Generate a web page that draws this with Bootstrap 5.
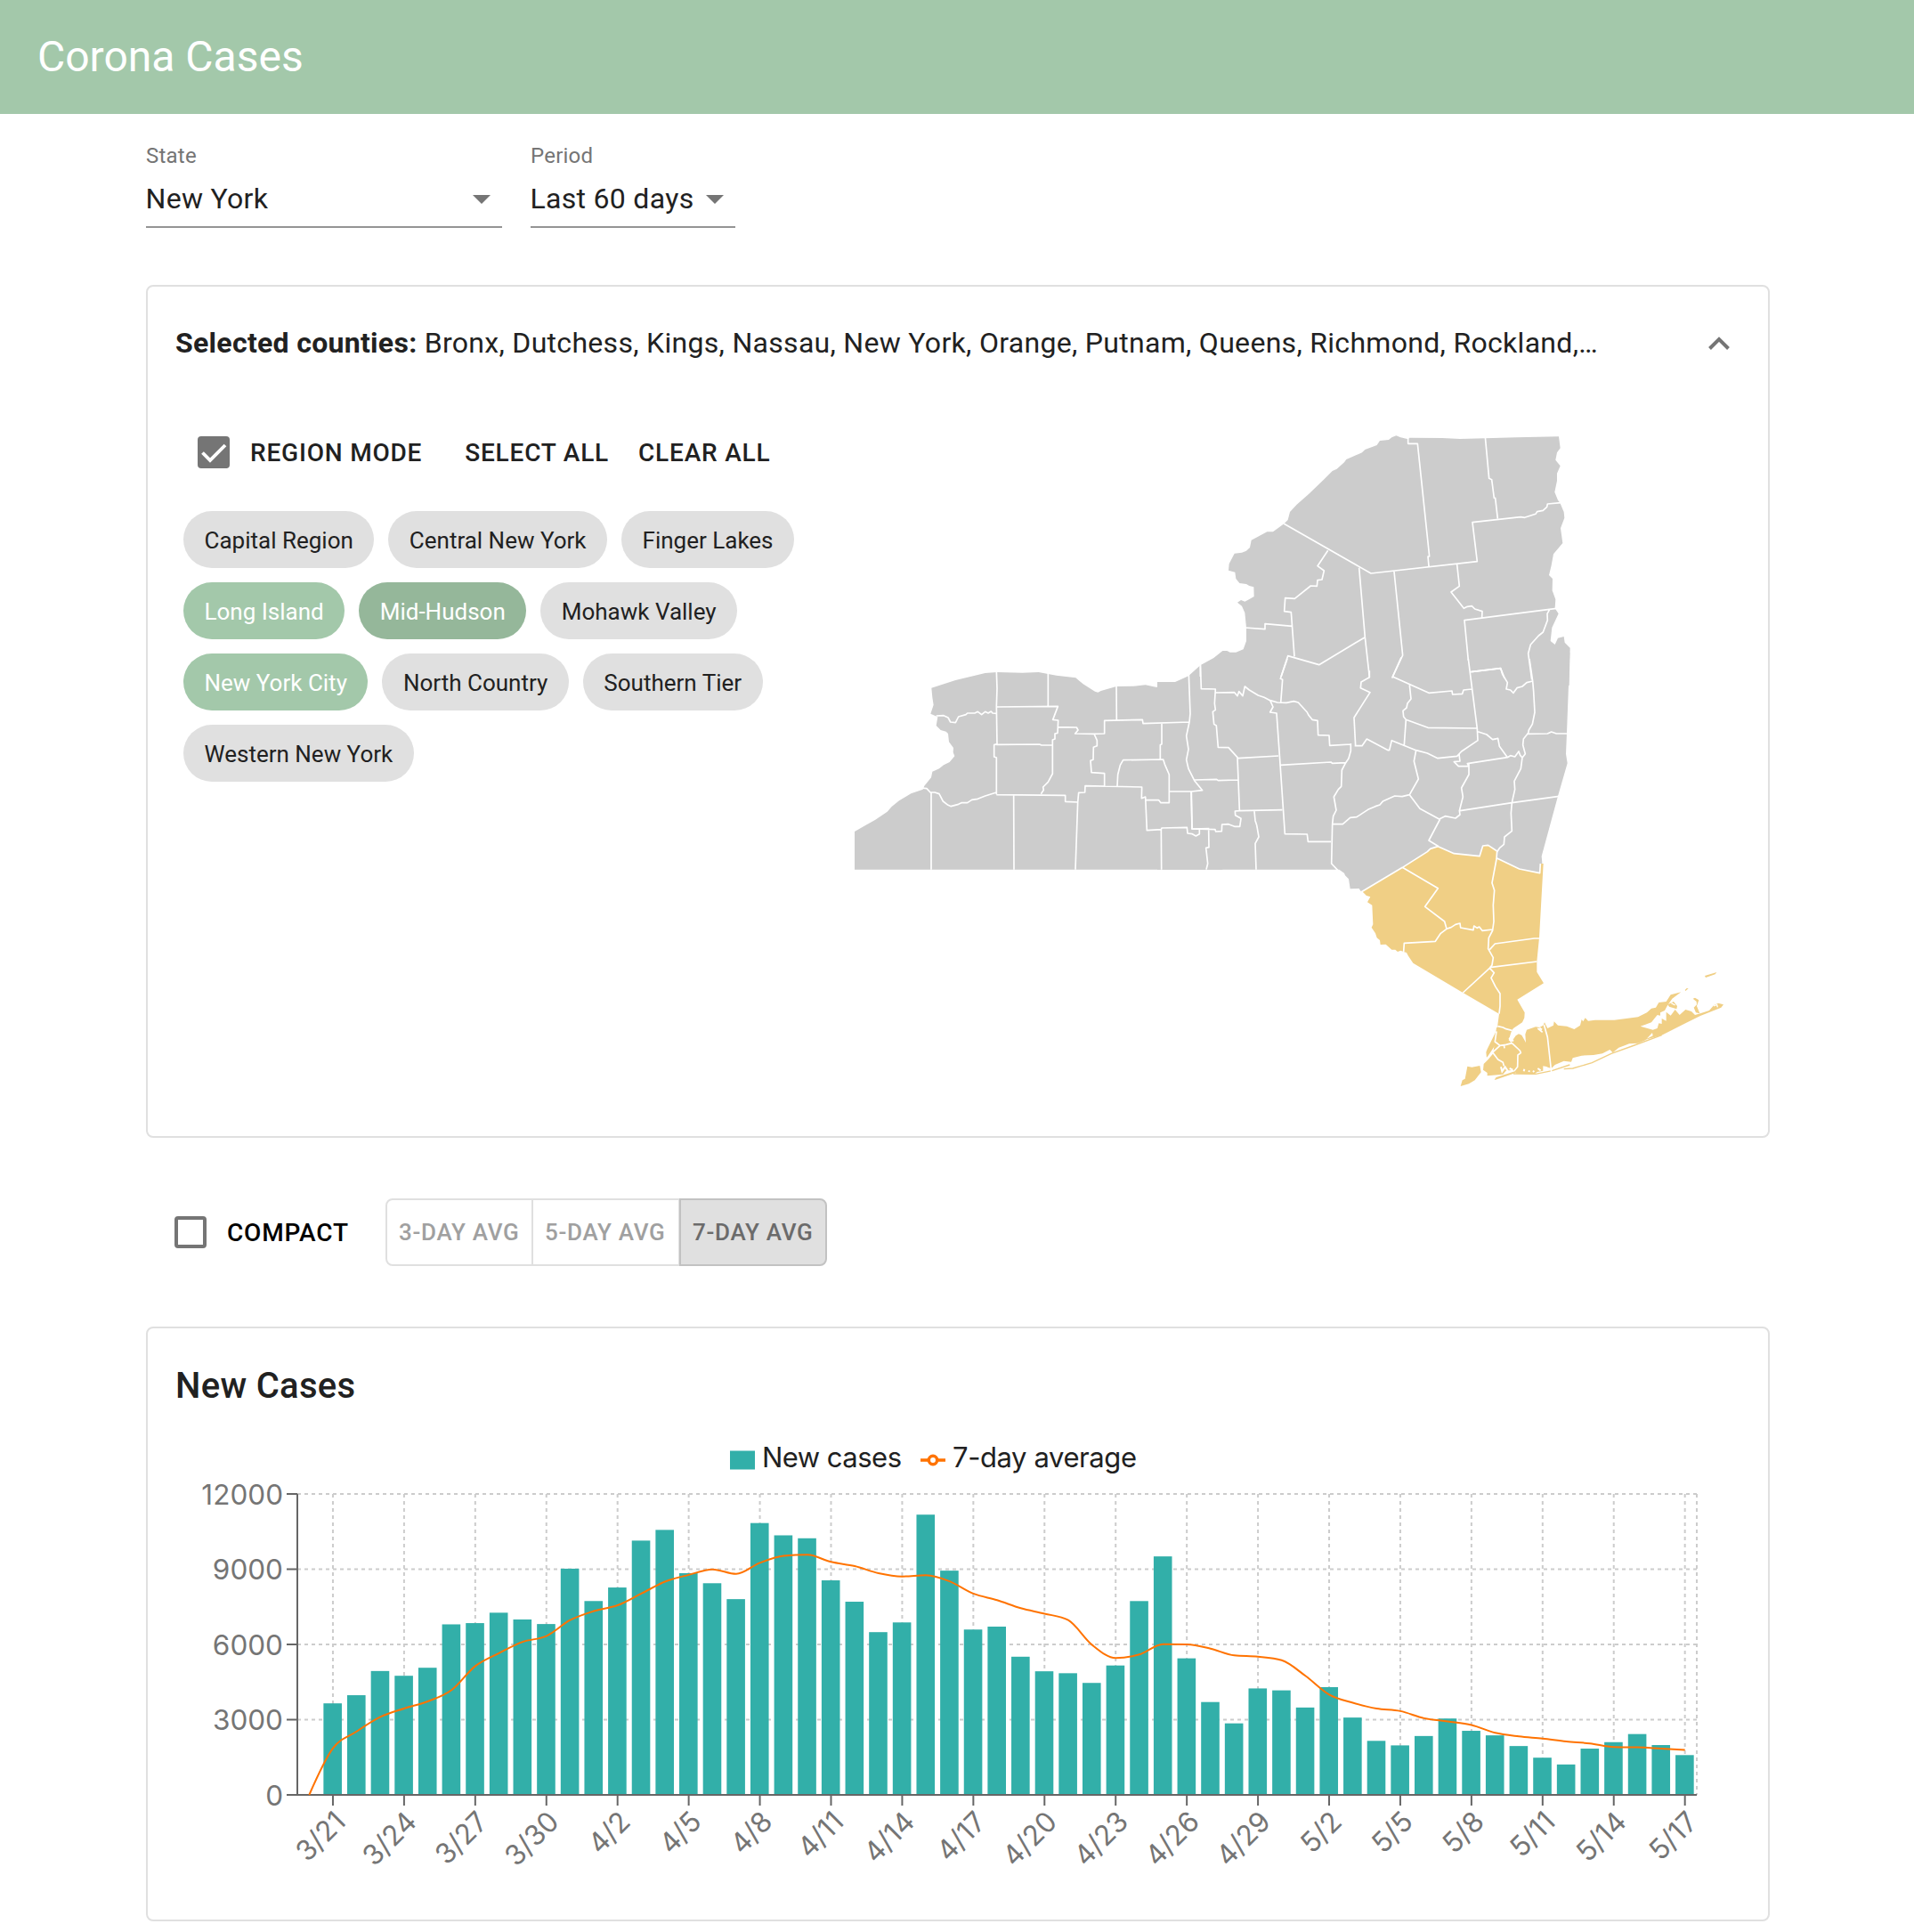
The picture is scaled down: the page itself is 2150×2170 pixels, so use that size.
<!DOCTYPE html>
<html lang="en">
<head>
<meta charset="utf-8">
<title>Corona Cases</title>
<link href="https://cdn.jsdelivr.net/npm/bootstrap@5.3.0/dist/css/bootstrap.min.css" rel="stylesheet">
<style>
body{font-family:Roboto,"Liberation Sans",sans-serif;color:#212121;background:#fff;letter-spacing:.3px;font-size:32px;line-height:1.2;overflow:hidden}
.topbar{height:128px;background:#a3c8aa;padding:0 42px;font-size:48px;letter-spacing:0}
.page{width:1824px;margin-left:164px}
.filters{gap:32px;height:192px;padding-top:32px}
.field{height:96px;border-bottom:2px solid #949494;padding-top:1px}
.field.state{width:400px}.field.period{width:230px}
.field label{display:block;font-size:24px;line-height:28px;color:#757575;letter-spacing:.22px}
.field .value{margin-top:15px;line-height:38px;padding-right:13px}
.field .value span{margin-left:-.5px}
.field .value svg{margin-top:2px}
.panel{border:2px solid #e0e0e0;border-radius:8px}
.panel-map{height:958px}
.summary{height:128px;padding:0 38px 2px 31px}
.summary .names{width:1600px}
.side{width:792px;padding-left:40px}
.tools{height:116px;font-size:28px;font-weight:500;letter-spacing:.8px;padding-left:10px}
.tools span{padding-top:2px}
.chips{gap:16px;width:720px;margin-top:8px}
.chip{height:64px;line-height:66px;padding:0 23.500px;border-radius:32px;background:#e0e0e0;font-size:26px;letter-spacing:0}
.chip.on{background:#a3c8aa;color:#fff}.chip.focus{background:#95b79a;color:#fff}
.map{width:984px;height:760px;margin-top:24px}
.map .land{fill:#ccc}.map .sel{fill:#f0cf85}
.map .bd{fill:none;stroke:#fff;stroke-width:5;stroke-linejoin:round}
.options{height:212px;padding-left:27px;font-size:28px;font-weight:500;letter-spacing:.8px;color:#000}
.avg{height:76px;margin-left:41px}
.avg .btn{width:166px;padding:0;border:2px solid #e0e0e0;border-radius:8px;color:#a0a0a0;font-size:26px;font-weight:500;letter-spacing:.74px}
.avg .btn+.btn{margin-left:0;border-left-width:0}
.avg .btn.active{background:#e0e0e0;border-color:#c2c2c2;color:#6b6b6b;border-left:2px solid #c2c2c2;margin-left:-2px}
.panel-chart{height:668px;padding:42px 0 0 31px}
.panel-chart h2{font-size:40px;font-weight:500;line-height:46px;margin:0;letter-spacing:.3px}
.chart{display:block;width:1780px;height:560px;margin-top:8px;font-family:Inter,"Liberation Sans",sans-serif;letter-spacing:0}
</style>
</head>
<body>
<header class="topbar d-flex align-items-center text-white">Corona Cases</header>
<main class="page">
  <div class="filters d-flex align-items-start">
    <div class="field state"><label>State</label>
      <div class="value d-flex justify-content-between align-items-center"><span>New York</span><svg width="20" height="10"><path d="M0 0h20L10 10z" fill="#757575"/></svg></div></div>
    <div class="field period"><label>Period</label>
      <div class="value d-flex justify-content-between align-items-center"><span>Last 60 days</span><svg width="20" height="10"><path d="M0 0h20L10 10z" fill="#757575"/></svg></div></div>
  </div>

  <section class="panel panel-map">
    <div class="summary d-flex align-items-center justify-content-between">
      <div class="names text-nowrap"><b>Selected counties:</b> Bronx, Dutchess, Kings, Nassau, New York, Orange, Putnam, Queens, Richmond, Rockland,…</div>
      <svg width="36" height="24" viewBox="0 0 36 24"><path d="M8.500 18.500 19 8 29.500 18.500" fill="none" stroke="#757575" stroke-width="4"/></svg>
    </div>
    <div class="d-flex">
      <div class="side">
        <div class="tools d-flex align-items-center">
          <svg class="ms-1" width="40" height="36"><rect x="2" width="36" height="36" rx="4" fill="#757575"/><path d="M7.500 18.500 16 27 33 10" fill="none" stroke="#fff" stroke-width="3.800"/></svg>
          <span style="margin-left:21px">REGION MODE</span><span style="margin-left:48px">SELECT ALL</span><span style="margin-left:33px">CLEAR ALL</span>
        </div>
        <div class="chips d-flex flex-wrap">
          <span class="chip">Capital Region</span><span class="chip">Central New York</span><span class="chip">Finger Lakes</span>
          <span class="chip on">Long Island</span><span class="chip focus">Mid-Hudson</span><span class="chip">Mohawk Valley</span>
          <span class="chip on">New York City</span><span class="chip">North Country</span><span class="chip">Southern Tier</span>
          <span class="chip">Western New York</span>
        </div>
      </div>
      <svg class="map" viewBox="958 474 984 760">
        <!-- western New York -->
        <g transform="translate(940 720) scale(.33333)">
          <path class="land" d="M60 770V642L90 625 130 602 170 575 185 558 210 538 250 514 290 500 295 488 318 460 322 440 345 430 360 418 380 408 397 388 392 375 393 360 378 340 375 312 368 305 350 300 335 285 340 256 316 245 326 215 322 190 319 158 400 132 500 108 540 105 625 107 680 105 740 116 805 124 830 145 870 170 880 173 890 168 942 153 1000 152 1040 148 1075 155 1100 155 1120 145 1160 136 1185 120 1205 108 1225 82 1300 60V770Z"/>
        </g>
        <!-- northern New York -->
        <g transform="translate(1320 460) scale(.33333)">
          <path class="land" d="M0 920 55 900 85 862 130 837 160 813 175 813 185 818 205 818 230 808 240 780V735L235 685 225 662 210 650 222 642 235 647 245 642 266 630 265 598 250 594 240 588 217 585 205 570 202 548 180 542 182 520 200 485 225 482 240 476 252 465 257 440 285 425 310 412 330 412 367 385 380 372 387 345 410 320 450 285 500 237 530 207 545 200 570 178 577 168 630 145 640 135 680 120 690 105 720 102 730 94 745 88 760 94 785 100 790 95 900 96 960 99 1045 97 1150 94 1293 91 1298 130 1287 145 1282 170 1298 190 1287 215V240L1279 278 1290 305 1297 314 1310 345 1312 365 1299 400 1306 450 1275 487 1268 525 1260 558 1272 570 1271 610 1282 640 1280 670 1292 688 1270 735 1265 780 1280 792 1290 770 1310 765 1313 785 1331 803 1328 930H0Z"/>
        </g>
        <!-- central and southern New York -->
        <g transform="translate(1320 740) scale(.33333)">
          <path class="land" d="M-60 710V78H0L45 58 85 22 200-20H1330L1320 250 1317 320 1322 352 1290 463 1235 665 1237 687 1232 722 1160 712 1083 690 1070 900 625 782 620 774 590 775 585 742 573 730 570 722 553 710Z"/>
        </g>
        <g class="bd" transform="translate(1320 460) scale(.33333)">
          <path d="M367 385 660 552 1018 512 1002 380 1165 362 1178 364 1215 352 1220 344 1240 340 1253 328 1255 318 1300 314M785 90V115H817L857 495H852L855 528M1045 92 1058 232 1067 236 1075 298H1079L1087 367M515 475 480 527 502 543 495 573 480 575 478 595 457 594 403 637 371 635 368 680 391 683 402 832M236 735 303 740V722L395 730M357 900 380 830 485 860 640 767M620 533 640 767 655 902M738 546 767 828 731 905M950 522 958 595 930 615 973 670 985 664 1000 662 1010 672 1035 680 1034 700M1285 670 975 710 988 845M1262 674 1254 688 1255 710 1240 750 1225 762 1198 792 1190 822 1202 910M997 884 1097 872 1110 905M85 855V900"/>
        </g>
        <g class="bd" transform="translate(1320 740) scale(.33333)">
          <path d="M85 12 88 101 136 102 133 150 136 172 127 178 131 220 139 225 145 298 180 299 210 332 217 510M137 114 200 113 210 125 215 110 228 125 235 93 250 105 280 123 300 130 320 140 345 147 375 148 400 143 415 147 445 180 450 190 462 205 480 208 482 257 519 258 521 292 592 288M320 140 330 162 320 180 342 183 352 325 370 590 445 591 448 616H525M212 335 348 327M355 358 525 348 530 352 575 350M65 408 140 406 145 410 212 408M217 512 202 513 203 527 222 538 218 565 200 565 180 557 158 558 157 581 137 582 135 575 57 573 54 447M217 512 361 509M267 513 270 545 275 560 282 600 270 622 273 710M113 575 114 635 104 637 110 690 105 710M378 0 355 67 362 70 356 148M655 40V62L627 78 625 98 657 113 603 198 608 293M592 285V310L585 335 575 350 562 375 560 430 550 440 535 465 543 510 533 530 530 556 527 690 548 712M605 293H630L646 270 718 308 722 308 730 275 812 308 850 318 885 335 950 328 965 312 1020 275 1018 235 988 0M762-5 733 60 855 115 933 108 935 120 968 118 972 105 1000 102M790 88 795 135 783 150 780 165 768 175 770 195 778 205 772 290M778 205 852 232 1017 234M1020 245 1050 255 1070 272 1088 268 1093 295 1120 332 1130 326 1145 330 1158 312 1163 325 1170 333 1180 320 1172 290 1174 270 1190 250 1192 240 1204 220 1212 180 1208 110 1205 75 1194 0M997 44 1097 32 1103 52 1120 80 1116 102 1130 105 1140 115 1152 98 1170 93 1185 80 1205 75M1185 253 1255 252 1268 246 1285 252H1324M1120 332 985 353 990 362 955 362 940 347 960 345 957 322M990 355V390L965 435 970 465 958 512 960 525 945 537 910 530 890 540 825 505 790 458 820 405 805 345 812 308M530 556 565 557 590 535 612 533 650 508 675 497 690 492 700 480 740 462 765 464 790 458M960 512 1135 485 1294 463M1170 333 1165 370 1143 412 1145 440 1135 485 1132 520 1135 580 1110 600 1108 625 1093 638 1085 650M893 540 855 612 888 632"/>
        </g>
        <g class="bd" transform="translate(940 720) scale(.33333)">
          <path d="M318 510V770M285 495 303 497 315 510 330 510 345 515 358 540 375 553 385 557 410 550 420 545 440 545 455 535 475 532 500 522 538 510M538 100 540 160 538 220 540 347 530 350V390L538 393V517M335 252 360 251 375 258 383 273 400 275 410 255 435 248 440 243 465 243 475 238 488 248 500 238 510 243 520 237 525 243 538 244M712 100V220M538 222 745 220 728 265 746 267 744 310 735 312V330L727 333V447L712 475 695 492 697 502 688 515M538 349 683 348 690 351H727M746 290 808 291 813 300 803 312 865 313 902 312V268L1030 265 1032 278 1188 273M942 145 943 267M868 315 877 335V353L865 358 864 400 855 403 858 443 902 446V490M538 518 770 520V541L812 543 815 511 836 510 837 488 1028 492 1027 530 1040 525 1042 570 1045 638 1093 635 1095 630 1180 628 1182 648 1198 650 1210 657 1222 650V633M596 520 597 770M812 543 804 770M945 490 947 450 955 418 965 401 1100 399 1105 415 1120 450V545L1092 545 1085 536H1042M1095 278V347L1090 350V398M1120 507 1195 507 1232 503 1205 470 1185 430 1178 400 1185 365 1178 320 1188 273 1191 245 1186 112M1195 507 1197 633 1255 632M1093 635 1094 770"/>
        </g>
        <!-- Mid-Hudson -->
        <g transform="translate(1480 920) scale(.33333)">
          <path class="sel" d="M150 243 286 163 370 110 380 100 406 92 460 116 546 125 557 90 575 88 605 108 605 132 680 168 749 182 751 150 761 150 747 400 739 480V515L762 553 673 608 698 652 697 670 690 685 660 705 650 718 640 750 600 760 570 805 568 785 572 775 605 708 612 656 490 585 322 485 305 460 300 450 290 447 280 443 270 447 262 440 250 440 230 422 212 423 210 408 200 400 195 385 182 365 187 355 184 290 168 280 178 262 165 258Z"/>
          <path class="bd" d="M148 245 286 163 370 110 380 100 406 92 460 116 546 125 557 90 575 88 605 108M605 132 680 168 749 182 751 150M286 163 406 233 362 295 428 345 435 370 450 365 465 355 480 351 482 366 525 374 527 360 538 367 545 363 555 376 590 372M290 447 292 418 397 412 415 385 435 370M605 108 603 135 588 215 596 240 592 290 594 345 590 375 577 400 575 437 592 467 588 492 580 502 595 518 585 535 600 565 615 588V630L612 656M580 440 598 420 730 402H747M580 500 739 480M490 585 580 502"/>
        </g>
        <!-- New York City and Long Island -->
        <g transform="translate(1600 1060) scale(.33333)">
          <path class="sel" d="M243 282 295 290 284 325 305 345 296 338 294 330 308 310 318 304 328 308 342 333 340 305 345 290 375 280 388 282 400 275 405 265 415 285 435 275 437 262 450 275 480 278 505 288 525 275 530 255 535 262 542 250 552 260 575 257 640 257 720 247 750 232 765 218 780 215 790 198 815 195 830 172 865 163 835 185 818 210 810 225 795 232 795 242 785 240 765 265 745 272 728 278 770 290 785 285 790 268 800 270 800 252 815 260 815 230 830 242 845 222 860 240 880 222 900 228 912 240 930 235 960 225 975 208 990 200 1008 205 1000 215 930 243 880 268 800 308 740 325 770 310 768 300 745 325 720 335 690 337 675 343 655 350 635 367 625 357 600 370 570 375 530 377 500 385 495 398 470 395 440 408 428 420 400 412 400 428 380 432 370 440 310 437 300 425 275 428 265 440 212 445 212 435 198 425 200 405 215 390 232 370Z"/>
          <path class="sel" d="M145 413 160 416 187 411 191 433 170 460 150 472 122 480 128 460 137 455ZM905 185 912 182 925 190 918 210 928 235 915 232 908 215 918 205 917 195ZM945 108 985 96 980 103 948 114ZM878 156 884 150 890 151 880 159ZM236 458 242 450 305 430 308 435 240 458ZM820 205 840 195 852 210 850 220 825 212Z"/>
          <path d="M470 422 500 420 565 401 630 370 700 345 800 308M300 438 375 439 430 428 490 408" fill="none" stroke="#f0cf85" stroke-width="4"/>
          <path class="bd" d="M247 278 265 282 275 287 295 292M243 295 238 330 255 343 275 340 295 335M255 343 228 368 208 390M295 335 322 360 325 368 315 375 314 415 303 428M230 366 248 390 265 400 268 412M403 272 415 315 428 432M268 340 270 352M382 285 398 298"/>
          <path d="M258 415 262 430 272 415 282 430 275 437M287 420 298 425M388 284 396 290M335 430 337 422M352 432 354 427M366 428 370 432M382 420 392 427M405 415 415 420M285 318 300 328" fill="none" stroke="#fff" stroke-width="6"/>
          <path d="M975 210 986 205 988 214M832 200 845 207" fill="none" stroke="#fff" stroke-width="4"/>
        </g>
      </svg>
    </div>
  </section>

  <div class="options d-flex align-items-center">
    <svg width="46" height="36"><rect x="7" y="2" width="32" height="32" rx="2" fill="none" stroke="#757575" stroke-width="4"/></svg>
    <span style="margin-left:18px;padding-top:1px">COMPACT</span>
    <div class="btn-group avg" role="group">
      <button class="btn">3-DAY AVG</button><button class="btn">5-DAY AVG</button><button class="btn active">7-DAY AVG</button>
    </div>
  </div>

  <section class="panel panel-chart">
    <h2>New Cases</h2>
    <svg class="chart" id="chart" viewBox="197 1588 1780 560"></svg>
  </section>
</main>
<script src="https://cdn.jsdelivr.net/npm/bootstrap@5.3.0/dist/js/bootstrap.bundle.min.js"></script>
<script>
const L=334,R=1906,T=1678,B=2016;
const cases=[0,3650,3975,4940,4750,5070,6800,6850,7265,6995,6813,9020,7730,8270,10140,10567,8840,8440,7806,10840,10350,10233,8555,7703,6490,6877,11175,8942,6594,6710,5510,4929,4852,4465,5160,7729,9510,5445,3703,2852,4245,4168,3484,4297,3084,2155,1974,2348,3045,2555,2374,1948,1484,1213,1845,2103,2426,1987,1587];
const avg=[0,1858,2529,3110,3445,3729,4181,5136,5652,6103,6335,6968,7329,7561,8026,8503,8774,8994,8813,9252,9535,9574,9290,9123,8839,8710,8761,8516,8026,7768,7445,7226,6968,5987,5458,5600,6013,6000,5832,5561,5510,5368,4748,4000,3677,3445,3342,3058,2929,2787,2477,2335,2245,2129,2052,1910,1897,1845,1794];
const step=(R-L)/cases.length, X=i=>L+step*(i+.5), Y=v=>B-v/12000*(B-T);
let s='';
const line=(x1,y1,x2,y2,c,extra='')=>`<line x1="${x1}" y1="${y1}" x2="${x2}" y2="${y2}" stroke="${c}" stroke-width="2" ${extra}/>`;
for(let k=0;k<5;k++) s+=line(L,Y(k*3000),R,Y(k*3000),'#ccc','stroke-dasharray="4 4"');
for(let i=1;i<cases.length;i+=3) s+=line(X(i),T,X(i),B,'#ccc','stroke-dasharray="4 4"');
s+=line(R,T,R,B,'#ccc','stroke-dasharray="4 4"');
cases.forEach((v,i)=>{ if(v) s+=`<rect x="${X(i)-10.6}" y="${Y(v)}" width="20.6" height="${B-Y(v)}" fill="#32afa9"/>`; });
s+=line(L,T,L,B,'#666')+line(L,B,R,B,'#666');
for(let k=0;k<5;k++){ const y=Y(k*3000); s+=line(L-12,y,L,y,'#666')+`<text x="318" y="${y+11.5}" text-anchor="end" font-size="31.500" fill="#757575">${k*3000}</text>`; }
for(let i=1;i<cases.length;i+=3){ const d=new Date(2021,2,20+i); s+=line(X(i),B,X(i),B+12,'#666')+`<text transform="translate(${X(i)} ${B+16}) rotate(-45)" y="22.700" text-anchor="end" font-size="31.500" fill="#757575">${d.getMonth()+1}/${d.getDate()}</text>`; }
/* monotone cubic interpolation through the averages */
const py=avg.map(Y), n=py.length, m=[], sl=[];
for(let i=0;i<n-1;i++) sl[i]=(py[i+1]-py[i])/step;
for(let i=1;i<n-1;i++){ const p=(sl[i-1]+sl[i])/2; m[i]=(Math.sign(sl[i-1])+Math.sign(sl[i]))*Math.min(Math.abs(sl[i-1]),Math.abs(sl[i]),.5*Math.abs(p))||0; }
m[0]=(3*sl[0]-m[1])/2; m[n-1]=(3*sl[n-2]-m[n-2])/2;
let d=`M${X(0)} ${py[0]}`;
for(let i=0;i<n-1;i++) d+=`C${X(i)+step/3} ${py[i]+m[i]*step/3} ${X(i+1)-step/3} ${py[i+1]-m[i+1]*step/3} ${X(i+1)} ${py[i+1]}`;
s+=`<path d="${d}" fill="none" stroke="#ff7300" stroke-width="2"/>`;
s+=`<rect x="820" y="1629.500" width="28" height="21" fill="#32afa9"/><text x="856" y="1648" font-size="31" textLength="157" fill="#212121">New cases</text>`;
s+=`<path d="M1034 1640h9.300M1052.700 1640h9.300" stroke="#ff7300" stroke-width="3.500"/><circle cx="1048" cy="1640" r="4.700" fill="none" stroke="#ff7300" stroke-width="3.500"/><text x="1070" y="1648" font-size="31" textLength="207" fill="#212121">7-day average</text>`;
document.getElementById('chart').innerHTML=s;
</script>
</body>
</html>
